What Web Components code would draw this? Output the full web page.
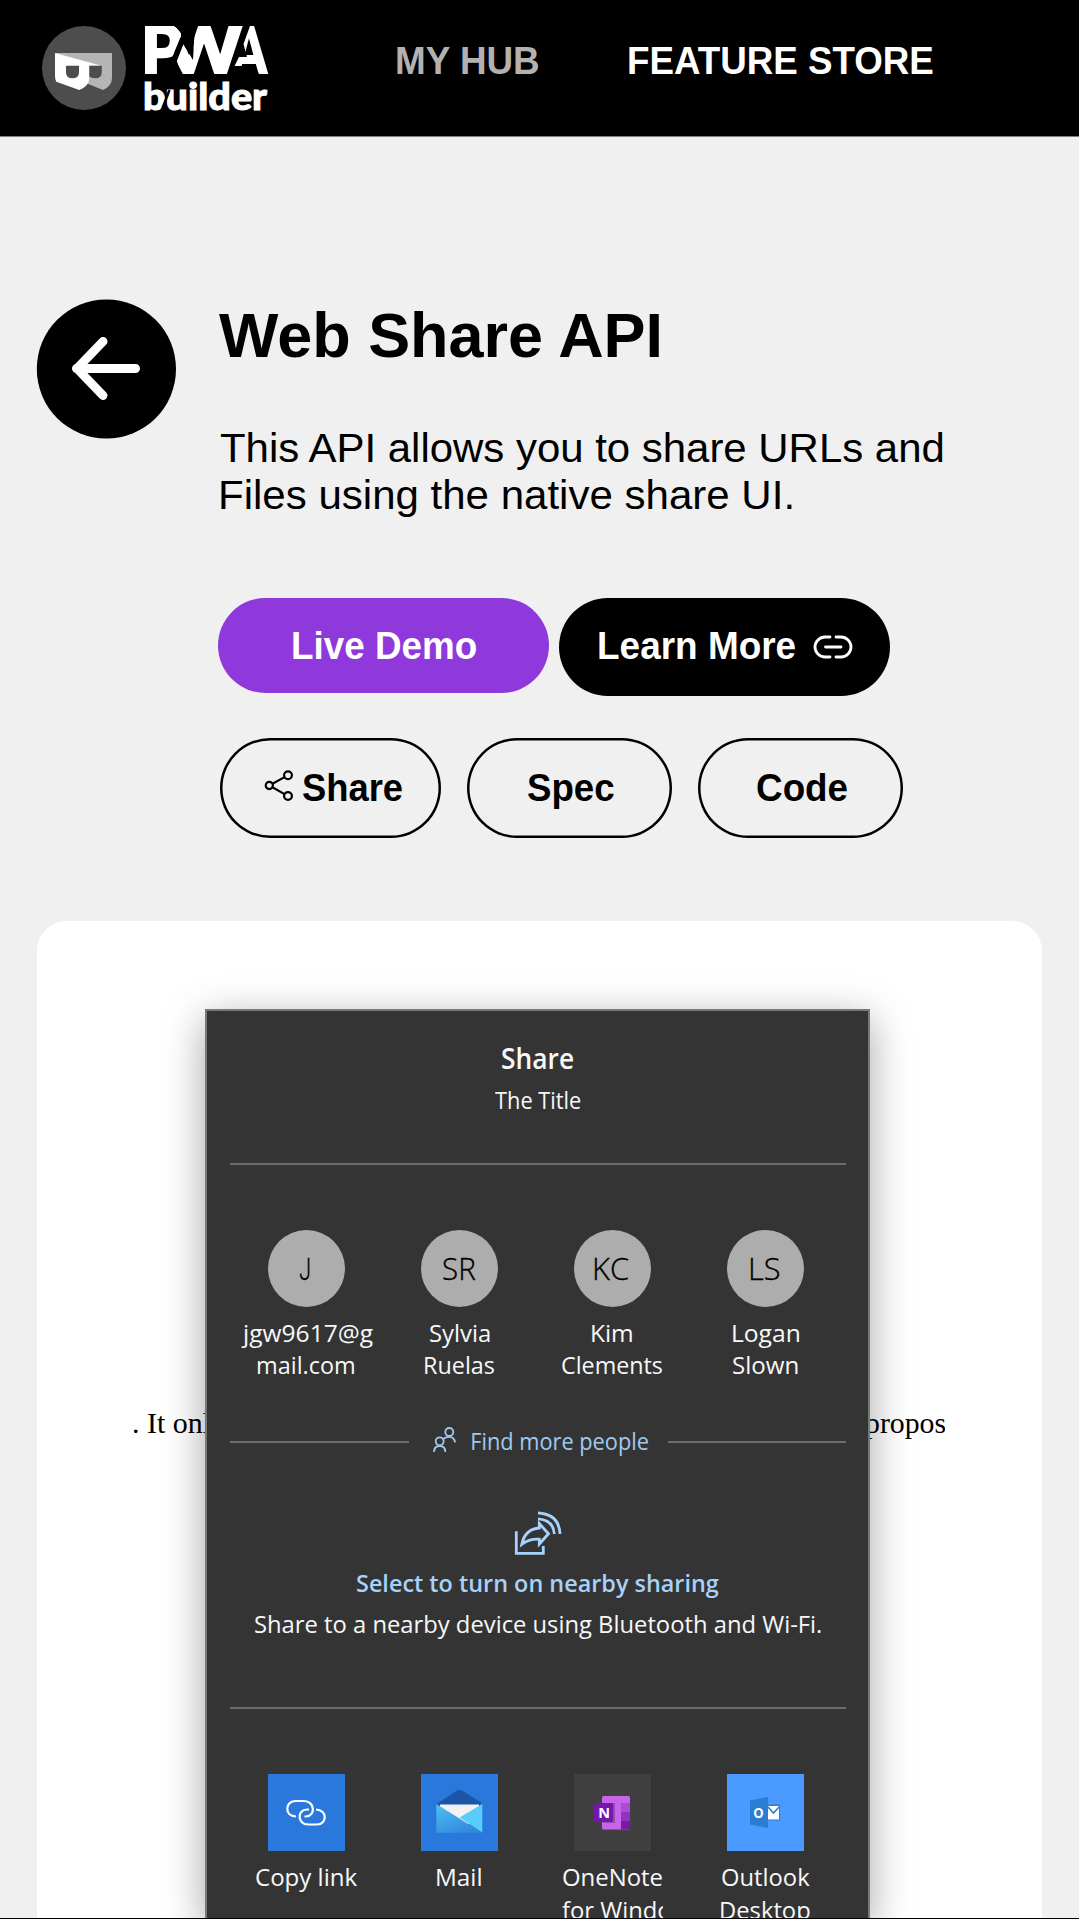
<!DOCTYPE html>
<html lang="en">
<head>
<meta charset="utf-8">
<title>PWABuilder - Web Share API</title>
<style>
  html, body { margin: 0; padding: 0; }
  body { background: #f0f0f0; font-family: Arial, "Liberation Sans", sans-serif; color: #000; }
</style>
</head>
<body>
<pwa-page></pwa-page>
<script>
/* Text set to an exact ink width (w); the box is as tall as its capitals (h) and ends on the baseline. */
class FitText extends HTMLElement {
  connectedCallback() {
    const root = this.attachShadow({ mode: 'open' });
    root.innerHTML = `<style>
      :host { display: block; white-space: nowrap; flex: none; }
      span { display: inline-block; transform-origin: 0 0; line-height: normal; vertical-align: top; }
    </style><span><slot></slot></span>`;
    const span = root.querySelector('span');
    const w = +this.getAttribute('w'), h = +this.getAttribute('h');
    const cs = getComputedStyle(this);
    const ctx = document.createElement('canvas').getContext('2d');
    ctx.font = `${cs.fontWeight} ${cs.fontSize} ${cs.fontFamily}`;
    const m = ctx.measureText(this.textContent);
    const ink = m.actualBoundingBoxLeft + m.actualBoundingBoxRight;
    this.style.width = w + 'px';
    this.style.height = h + 'px';
    span.style.transform = `scaleX(${w / ink}) translateX(${m.actualBoundingBoxLeft}px)`;
    span.style.marginTop = (h - Math.round(m.fontBoundingBoxAscent)) + 'px';
  }
}

const define = (name, html) => customElements.define(name, class extends HTMLElement {
  connectedCallback() {
    this.attachShadow({ mode: 'open' }).innerHTML = html;
  }
});

customElements.define('fit-text', FitText);

define('pwa-logo', `<style>
  :host { display: flex; gap: 18px; }
  svg { display: block; flex: none; }
  text { font-family: Lato, sans-serif; font-weight: 900; fill: #fff; stroke: #fff; }
</style>
<svg width="84" height="84" viewBox="0 0 84 84">
  <circle cx="42" cy="42" r="42" fill="#4d4d4d"/>
  <path d="M13 27H70V52Q70 60 61 64L45 57.500Z" fill="#b5b5b5"/>
  <path d="M13 27L59.500 39.700H47.300V52Q47.300 60 37.300 64L14.300 55.700Q13 54 13 50Z" fill="#fff"/>
  <path d="M24 39.700H37V46Q37 52.300 30.500 52.300T24 46ZM47.300 39.700H59.800V46Q59.800 52.300 53.300 52.300Q49 52.300 47.300 50.500Z" fill="#4d4d4d"/>
</svg>
<svg width="126" height="90" viewBox="0 0 126 90" style="margin-top:-2px">
  <defs>
    <clipPath id="p"><path d="M1 2H31L37 9V12L27 36H17V50H1Z"/></clipPath>
    <clipPath id="w"><path d="M39.300 20.500L49 36L51 2H100L92 50H39L32.500 38Z"/></clipPath>
    <clipPath id="a"><path d="M106 2L99.500 20L103 33L95 33L90.500 42H109L112 50H126L112 2Z"/></clipPath>
  </defs>
  <g clip-path="url(#p)"><text x="-3.500" y="50" font-size="66" stroke-width="2.500" textLength="42" lengthAdjust="spacingAndGlyphs">P</text></g>
  <g clip-path="url(#w)"><text x="22" y="50" font-size="66" stroke-width="2.500" textLength="76" lengthAdjust="spacingAndGlyphs">W</text></g>
  <g clip-path="url(#a)"><text x="87" y="50" font-size="66" stroke-width="2" textLength="36" lengthAdjust="spacingAndGlyphs">A</text></g>
  <text x="-1" y="85.500" font-size="38" stroke-width="1" textLength="124" lengthAdjust="spacingAndGlyphs">builder</text>
  <path d="M25.500 66L17 88" stroke="#000" stroke-width="2.500"/>
</svg>`);

define('site-header', `<style>
  :host { display: flex; align-items: flex-start; height: 137px; background: #000; box-sizing: border-box; padding-left: 42px; color: #fff; font-weight: 700; font-size: 38px; border-bottom: 1px solid #808080; }
  pwa-logo { margin-top: 26px; width: 228px; }
  nav { display: flex; gap: 90px; margin: 47px 0 0 127px; }
  .dim { color: #b2b2b2; }
</style>
<pwa-logo></pwa-logo>
<nav><fit-text class="dim" w="142" h="27">MY HUB</fit-text><fit-text w="303.500" h="27">FEATURE STORE</fit-text></nav>`);

define('back-button', `<style>:host { display: block; width: 140px; height: 140px; } svg { display: block; }</style>
<svg width="140" height="140" viewBox="0 0 140 140"><circle cx="70.400" cy="70" r="69.600"/>
<path d="M99.500 69.500H40.500M67 42.500L41 69.500L67 96.500" fill="none" stroke="#fff" stroke-width="9" stroke-linecap="round" stroke-linejoin="round"/></svg>`);

define('pill-button', `<style>
  :host { display: flex; box-sizing: border-box; border-radius: 50px; font-weight: 700; font-size: 38px; flex: none; }
  :host([kind=demo]) { background: #8f38dc; color: #fff; width: 331px; height: 94.500px; padding: 33.700px 0 0 75.700px; }
  :host([kind=learn]) { background: #000; color: #fff; width: 331px; height: 97.500px; padding: 33.700px 0 0 40px; }
  :host([kind=line]) { box-shadow: inset 0 0 0 2.500px #000; height: 100px; padding-top: 36.700px; }
</style><slot></slot>`);

define('feature-hero', `<style>
  :host { display: flex; padding: 161.500px 0 0 36px; height: 622.500px; box-sizing: content-box; }
  .main { padding: 12px 0 0 43px; }
  h1 { margin: 0; font-size: 62.500px; font-weight: 700; }
  .desc { font-size: 41.500px; display: flex; flex-direction: column; gap: 18px; margin: 76.500px 0 0 .8px; }
  .desc > :last-child { margin-left: 1.500px; }
  .row { display: flex; align-items: flex-start; }
  .first { gap: 10px; margin: 89px 0 0 -1.500px; }
  .second { margin: 42px 0 0 1.200px; }
  svg { display: block; flex: none; }
</style>
<back-button></back-button>
<div class="main">
  <h1><fit-text w="443" h="45">Web Share API</fit-text></h1>
  <div class="desc"><fit-text w="725" h="30">This API allows you to share URLs and</fit-text><fit-text w="570.500" h="29">Files using the native share UI.</fit-text></div>
  <div class="row first">
    <pill-button kind="demo"><fit-text w="183" h="27">Live Demo</fit-text></pill-button>
    <pill-button kind="learn"><fit-text w="196" h="27">Learn More</fit-text>
      <svg width="40" height="24" viewBox="0 0 40 24" style="margin:3.500px 0 0 18px" fill="none" stroke="#fff" stroke-width="2.800" stroke-linecap="round"><path d="M17 2H12A10 10 0 0 0 12 22H17M23 2H28A10 10 0 0 1 28 22H23M12.500 12H28"/></svg>
    </pill-button>
  </div>
  <div class="row second">
    <pill-button kind="line" style="width:220.500px;padding-left:43.500px">
      <svg width="30" height="32" viewBox="0 0 30 32" style="margin:-4.500px 9.500px 0 0" fill="none" stroke="#000" stroke-width="2.200"><circle cx="5.300" cy="15.500" r="3.600"/><circle cx="24" cy="5.200" r="3.900"/><circle cx="24" cy="26" r="3.900"/><path d="M8.500 13.700L20.500 7.100M8.500 17.300L20.500 24.100"/></svg>
      <fit-text w="99" h="27">Share</fit-text></pill-button>
    <pill-button kind="line" style="width:205px;padding-left:61.300px;margin-left:26px"><fit-text w="86.500" h="27">Spec</fit-text></pill-button>
    <pill-button kind="line" style="width:205px;padding-left:59px;margin-left:26px"><fit-text w="90" h="27">Code</fit-text></pill-button>
  </div>
</div>`);

define('share-target', `<style>
  :host { display: flex; flex-direction: column; align-items: center; width: 153px; }
  ::slotted(fit-text) { margin: 0 0 15.500px 1px; }
</style><slot name="pic"></slot><slot></slot>`);

define('contact-avatar', `<style>
  :host { display: flex; justify-content: center; width: 77px; height: 77px; box-sizing: border-box; padding-top: 27.500px; border-radius: 50%; background: #adadad; color: #000; font-weight: 300; font-size: 31.500px; margin-bottom: 18px; -webkit-text-stroke: .35px #000; }
</style><slot></slot>`);

define('app-tile', `<style>
  :host { display: block; width: 77px; height: 77px; margin-bottom: 17.500px; }
</style><slot></slot>`);

define('share-dialog', `<style>
  :host { display: flex; flex-direction: column; align-items: center; box-sizing: border-box; width: 665px; height: 912px; border: 2px solid #777978; border-bottom: 0; background: #343434; color: #f8f8f8; font-family: "Open Sans", "Segoe UI", sans-serif; font-size: 24px; box-shadow: 0 10px 38px rgba(0,0,0,.36); overflow: hidden; }
  :host > *, fit-text, hr { position: static; }
  .mid { margin-left: 1.500px; }
  hr { border: 0; margin: 0 0 0 1px; height: 2px; width: 616px; background: #6c6c6c; flex: none; }
  .row { display: flex; width: 612px; flex: none; margin-left: -3px; }
  .find { display: flex; align-items: flex-start; width: 616px; color: #a0c9f1; margin: 37.500px 0 0 1px; }
  .find hr { margin: 14px 0 0; }
  svg { display: block; flex: none; }
  .clip { width: 101px; overflow: hidden; height: 40px; margin-top: -8px; padding-top: 8px; }
  .blue { color: #a6d2fb; }
  svg text { font-family: "Open Sans", sans-serif; font-weight: 700; }
</style>
<fit-text class="mid" w="71" h="20" style="font-size:28px;font-weight:600;margin-top:38px">Share</fit-text>
<fit-text class="mid" w="85.500" h="17" style="font-size:23px;margin-top:22.500px">The Title</fit-text>
<hr style="margin-top:54.500px">
<div class="row" style="margin-top:64.500px">
  <share-target><contact-avatar slot="pic"><fit-text w="9.500" h="22.500" style="font-family:Roboto,sans-serif;margin-right:3px">J</fit-text></contact-avatar><fit-text w="132" h="17">jgw9617@g</fit-text><fit-text w="96.500" h="17">mail.com</fit-text></share-target>
  <share-target><contact-avatar slot="pic"><fit-text w="33" h="22.500">SR</fit-text></contact-avatar><fit-text w="60" h="17">Sylvia</fit-text><fit-text w="69.500" h="17">Ruelas</fit-text></share-target>
  <share-target><contact-avatar slot="pic"><fit-text w="33.500" h="22.500">KC</fit-text></contact-avatar><fit-text w="40.500" h="17">Kim</fit-text><fit-text w="100.500" h="17">Clements</fit-text></share-target>
  <share-target><contact-avatar slot="pic"><fit-text w="28.500" h="22.500">LS</fit-text></contact-avatar><fit-text w="66" h="17">Logan</fit-text><fit-text w="64.500" h="17">Slown</fit-text></share-target>
</div>
<div class="find">
  <hr style="width:179px">
  <svg width="24" height="26" viewBox="0 0 24 26" style="margin:0 15.500px 0 24px" fill="none" stroke="currentColor" stroke-width="1.800"><circle cx="16.300" cy="5" r="4"/><circle cx="6.700" cy="14.300" r="4"/><path d="M1 25Q1.200 19 6.700 19T12.400 25M10.500 12Q12 9.800 16 9.800Q21.500 9.800 22 15.500"/></svg>
  <fit-text w="176.500" h="17" style="margin-top:5.500px">Find more people</fit-text>
  <hr style="width:178px;margin-left:auto">
</div>
<svg class="mid" width="48" height="46" viewBox="0 0 48 46" style="margin-top:58px" fill="none" stroke="#a6d2fb" stroke-width="2.800"><path d="M2.300 20.300V42.300H29.300V35M25.300 12.500L34.500 22.800L25.300 33V28.200Q15.500 27.500 7.800 33.300Q11 18 25.300 17Z"/><path d="M24 2Q45 3 46 23M24 7.800Q39.500 9 40.300 23"/></svg>
<fit-text class="blue mid" w="361.500" h="17" style="font-weight:600;margin-top:17.500px">Select to turn on nearby sharing</fit-text>
<fit-text class="mid" w="566" h="17" style="margin-top:24px">Share to a nearby device using Bluetooth and Wi-Fi.</fit-text>
<hr style="margin-top:74.500px">
<div class="row" style="margin-top:65px">
  <share-target><app-tile slot="pic">
    <svg width="77" height="77" viewBox="0 0 77 77"><path fill="#2b78dc" d="M0 0H77V77H0Z"/><g fill="none" stroke="#fff" stroke-width="2.200"><path d="M28 42.500C16 42 17 27.500 27 27H36C47 27 48 42 38 42.500H36.500"/><path d="M48 35.500C60 36 59 50.500 49 50.500H40C29.500 50.500 28.500 36 39 35.500H41"/></g></svg>
  </app-tile><fit-text w="101.500" h="17">Copy link</fit-text></share-target>
  <share-target><app-tile slot="pic">
    <svg width="77" height="77" viewBox="0 0 77 77"><defs><linearGradient id="m" x1="0" y1="0" x2=".6" y2="1"><stop offset="0" stop-color="#50bff2"/><stop offset="1" stop-color="#328add"/></linearGradient></defs><path fill="#2b78dc" d="M0 0H77V77H0Z"/><path d="M15.500 30L36 16.500Q38.500 15 41 16.500L61 29L58 32H18Z" fill="#1d56a8"/><path d="M19 30.500H58V50H19Z" fill="#f2f2f2"/><path d="M61.300 30V58.500L38.500 43.500Z" fill="#58cdf9"/><path d="M15.300 30L61.300 58.700H15.300Z" fill="url(#m)"/></svg>
  </app-tile><fit-text w="44.500" h="17">Mail</fit-text></share-target>
  <share-target><app-tile slot="pic">
    <svg width="77" height="77" viewBox="0 0 77 77"><path fill="#404040" d="M0 0H77V77H0Z"/><rect x="28" y="22" width="28" height="33.500" rx="1.500" fill="#c764e9"/><path fill="#ae4bd5" d="M47 29H56V38H47Z"/><path fill="#9332bf" d="M47 38H56V46.500H47Z"/><path fill="#7719aa" d="M47 46.500H56V54Q56 55.500 54.500 55.500H47Z"/><path d="M29 29H41V49H29Z" fill="#000" opacity=".25"/><rect x="20" y="29" width="19" height="19" rx="1.500" fill="#7218ae"/><text x="24.200" y="43.800" font-size="14.500" fill="#fff">N</text></svg>
  </app-tile><fit-text w="99.500" h="17" style="margin-top:.5px">OneNote</fit-text><div class="clip"><fit-text w="139" h="17">for Windows</fit-text></div></share-target>
  <share-target><app-tile slot="pic">
    <svg width="77" height="77" viewBox="0 0 77 77"><path fill="#4b9aff" d="M0 0H77V77H0Z"/><path d="M41 30.500H53V46.500H41Z" fill="#2b7cd3"/><path d="M41 32H52V45.500H41Z" fill="#fff"/><path d="M41 33L46.500 39L52 33" fill="none" stroke="#2b7cd3" stroke-width="1.600"/><path d="M23 26.500L41 23V54L23 50.500Z" fill="#2b7cd3"/><text x="26.300" y="44" font-size="15" textLength="10.500" lengthAdjust="spacingAndGlyphs" fill="#fff">O</text></svg>
  </app-tile><fit-text w="88" h="17" style="margin-top:.5px">Outlook</fit-text><fit-text w="89" h="17">Desktop</fit-text></share-target>
</div>`);

define('feature-card', `<style>
  :host { display: grid; margin: 0 37px; height: 997px; background: #fff; border-radius: 30px 30px 0 0; }
  .text { grid-area: 1 / 1; display: flex; justify-content: space-between; align-items: flex-start; width: 812px; margin: 492px 0 0 96px; overflow: hidden; height: 40px; font-family: "Times New Roman", "Liberation Serif", serif; font-size: 30px; }
  .tail { width: 80px; }
  share-dialog { grid-area: 1 / 1; margin: 88px 0 0 167.500px; z-index: 1; }
</style>
<div class="text"><fit-text w="93" h="20">. It only</fit-text><div class="tail"><fit-text w="94" h="20">propose</fit-text></div></div>
<share-dialog></share-dialog>`);

define('pwa-page', `<style>
  :host { display: flex; flex-direction: column; height: 1919px; box-sizing: border-box; overflow: hidden; border-bottom: 1px solid #000; background: #f0f0f0; }
  site-header, feature-hero, feature-card { flex: none; }
</style>
<site-header></site-header><feature-hero></feature-hero><feature-card></feature-card>`);
</script>
</body>
</html>
